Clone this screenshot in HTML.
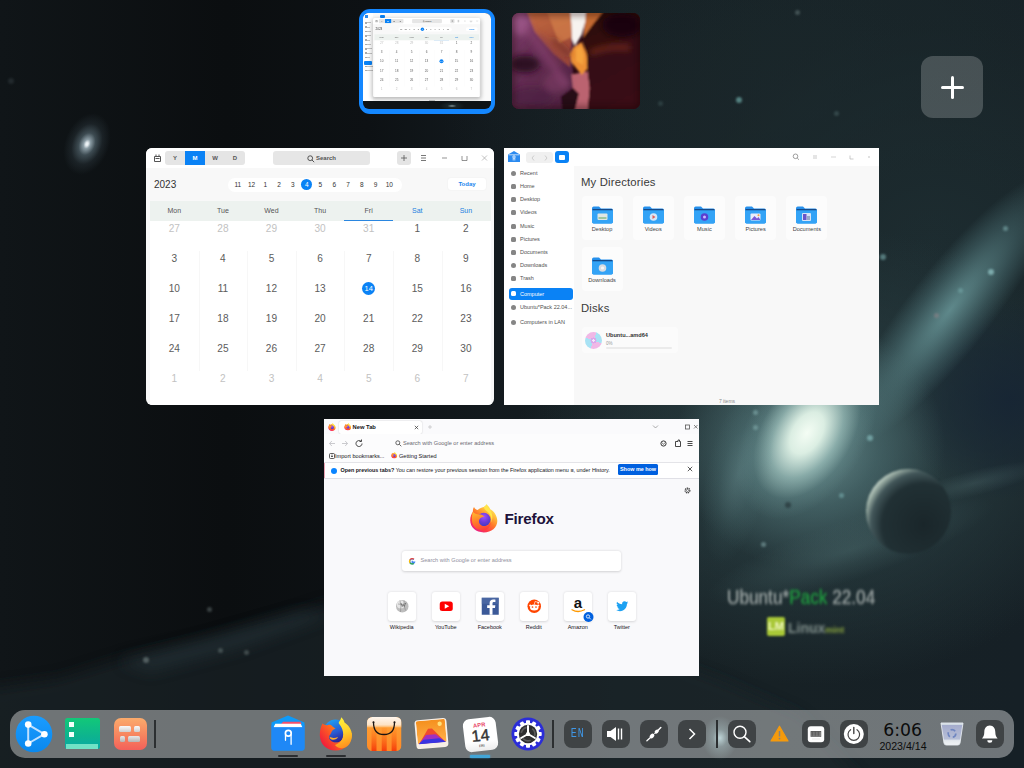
<!DOCTYPE html>
<html lang="en">
<head>
<meta charset="utf-8">
<title>Multitasking view</title>
<style>
*{box-sizing:border-box;margin:0;padding:0}
html,body{width:1024px;height:768px;overflow:hidden;background:#0d1114}
body{position:relative;font-family:"Liberation Sans",sans-serif;color:#222}
.abs{position:absolute}
#bg{position:absolute;left:0;top:0;width:1024px;height:768px;overflow:hidden;background:#0c1012}
#bg div{position:absolute}
/* ---------- workspace thumbs ---------- */
#ws1{left:359px;top:9px;width:136px;height:105px;border-radius:11px;background:#1487ff}
#ws1 .in{left:4px;top:4px;width:128px;height:96px;border-radius:6px;overflow:hidden;background:#0e1316}
#ws2{left:512px;top:13px;width:128px;height:96px;border-radius:7px;overflow:hidden;background:#3a1226}
#plus{left:921px;top:56px;width:62px;height:62px;border-radius:12px;background:rgba(255,255,255,.2)}
#plus i{position:absolute;background:#fff;border-radius:2px}
/* ---------- windows ---------- */
.win{position:absolute;overflow:hidden;background:#fff}
.cal{width:348px;height:257px;border-radius:6px}
#fm{left:504px;top:148px;width:375px;height:257px;background:#f8f8f8}
#ff{left:324px;top:419px;width:375px;height:257px;background:#f9f9fb}

/* ---------- calendar ---------- */
.cal{background:#f8f8f8}
.cal .tb{left:0;top:0;width:348px;height:20px;background:#fff}
.cal .seg{left:19px;top:3px;width:80px;height:14px;border-radius:3px;background:#e5e5e5;overflow:hidden}
.cal .seg b{position:absolute;top:0;width:20px;height:14px;font:bold 6px/14px "Liberation Sans",sans-serif;text-align:center;color:#555}
.cal .srch{left:127px;top:3px;width:97px;height:14px;border-radius:3px;background:#e6e6e6;font:bold 6px/14px "Liberation Sans",sans-serif;color:#555;text-align:center;padding-left:9px}
.cal .add{left:251px;top:3px;width:14px;height:14px;border-radius:3px;background:#e4e4e4}
.cal .yr{left:8px;top:30.5px;font:10px/12px "Liberation Sans",sans-serif;color:#333}
.cal .mon{left:82px;top:29.5px;width:174px;height:14px;border-radius:7px;background:#fff}
.cal .mon span{position:absolute;top:0;width:14px;margin-left:-7px;text-align:center;font:6.5px/14px "Liberation Sans",sans-serif;color:#333}
.cal .mon span.on{top:1.5px;width:11px;height:11px;margin-left:-5.5px;border-radius:50%;background:#0a82f5;color:#fff;line-height:11px}
.cal .today{left:302px;top:29.5px;width:38px;height:12.5px;border-radius:3px;background:#fff;box-shadow:0 0 2px rgba(0,0,0,.06);font:bold 6px/12.5px "Liberation Sans",sans-serif;color:#1a86ee;text-align:center}
.cal .wk{left:4px;top:52.5px;width:341px;height:20px;background:#edf2ef}
.cal .wk span{position:absolute;top:0;width:48.6px;text-align:center;font:7px/20px "Liberation Sans",sans-serif;color:#555}
.cal .wk span.we{color:#1a7fe0}
.cal .grid{left:4px;top:72.5px;width:341px;height:185px;background:#fff}
.cal .grid span{position:absolute;width:48.6px;height:30px;text-align:center;font:10.1px/15.4px "Liberation Sans",sans-serif;color:#5c5c5c}
.cal .grid span.o{color:#c2c2c2}
.cal .grid i{position:absolute;top:30px;width:1px;height:120px;background:#f7f7f7}

/* ---------- file manager ---------- */
#fm .tb{left:0;top:0;width:375px;height:18px;background:#fff}
#fm .side{left:0;top:18px;width:70px;height:239px;background:#fff;overflow:hidden}
#fm .side p{position:absolute;left:16px;white-space:nowrap;font:5.5px/10px "Liberation Sans",sans-serif;color:#505050}
#fm .side p i{position:absolute;left:-9px;top:2.5px;width:5px;height:5px;background:#858585;border-radius:1.5px}
#fm .side .sel{position:absolute;left:4.5px;top:122px;width:64.5px;height:11.5px;border-radius:3px;background:#0a82f5}
#fm h4{position:absolute;left:77px;font:normal 11.3px/14px "Liberation Sans",sans-serif;color:#3a3a3a;white-space:nowrap;letter-spacing:.18px}
#fm .fd{position:absolute;width:41px;height:44px;border-radius:4px;background:#fcfcfc}
#fm .fd svg{position:absolute;left:10px;top:10px}
#fm .fd u{position:absolute;left:-10px;width:61px;top:29.5px;text-align:center;text-decoration:none;font:5.6px/7px "Liberation Sans",sans-serif;color:#444}
#fm .disk{left:78px;top:179px;width:96px;height:26px;border-radius:4px;background:#fbfbfb}

/* ---------- firefox ---------- */
#ff .tabs{left:0;top:0;width:375px;height:15.5px;background:#fafafc}
#ff .tab{left:15px;top:1.8px;width:83px;height:13.2px;border-radius:2px;background:#fff;box-shadow:0 0 1.5px rgba(0,0,0,.25);font:bold 5.8px/12.5px "Liberation Sans",sans-serif;color:#15141a;padding-left:13.5px}
#ff .nav{left:0;top:15px;width:375px;height:17px;background:#fcfcfd}
#ff .url{left:67px;top:17.6px;width:264px;height:12.5px;border-radius:2px;background:#fcfcfd;font:5.6px/12.5px "Liberation Sans",sans-serif;color:#6a6a72;padding-left:12px}
#ff .bm{left:0;top:32px;width:375px;height:11px;background:#fcfcfd;font:5.6px/10px "Liberation Sans",sans-serif;color:#15141a;white-space:nowrap}
#ff .nb{left:0;top:43px;width:375px;height:16.5px;background:#fff;border-top:1px solid #e4e4e8;border-bottom:1px solid #e0e0e6;font:5.42px/15px "Liberation Sans",sans-serif;color:#15141a;white-space:nowrap}
#ff .btn{left:294px;top:45.3px;width:40px;height:11.2px;border-radius:1.5px;background:#0060df;color:#fff;font:bold 5.4px/11.2px "Liberation Sans",sans-serif;text-align:center}
#ff .wm{left:180.5px;top:91.3px;font:bold 15.2px/18px "Liberation Sans",sans-serif;color:#20123a;letter-spacing:-.2px}
#ff .sb{left:78px;top:132px;width:219px;height:19.5px;border-radius:3px;background:#fff;box-shadow:0 .5px 2.5px rgba(0,0,0,.16);font:5.6px/19.5px "Liberation Sans",sans-serif;color:#8f8f9d;padding-left:18.5px}
#ff .ts{position:absolute;top:173px;width:28.5px;height:28.5px;border-radius:3px;background:#fff;box-shadow:0 .5px 2.5px rgba(0,0,0,.14)}
#ff .ts svg{position:absolute;left:0;top:0;overflow:visible}
#ff .ts u{position:absolute;left:-10px;top:32px;width:48.5px;text-align:center;text-decoration:none;font:5.5px/7px "Liberation Sans",sans-serif;color:#15141a}
/* ---------- dock ---------- */
#dock{left:10px;top:710px;width:1004px;height:48px;border-radius:15px;background:rgba(255,255,255,.385)}
#dock .ab{position:absolute}
#dock .tr{position:absolute;top:10px;width:27.5px;height:28px;border-radius:8px;background:#3f4345}
#dock .tr svg{position:absolute;left:0;top:0}
#dock .sep{position:absolute;top:10px;width:2px;height:28px;background:#2c2f31}
#dock .ind{position:absolute;top:45.2px;width:20px;height:2.1px;border-radius:1px;background:#2a2d30}
.mini i{position:absolute}
</style>
</head>
<body>
<div id="bg">
<div style="left:0;top:0;width:1024px;height:768px;background:
radial-gradient(ellipse 300px 230px at 815px 455px,rgba(58,86,90,.95),rgba(44,66,70,.6) 45%,rgba(30,44,48,0) 100%),
radial-gradient(ellipse 360px 260px at 800px 110px,rgba(28,42,46,.55),rgba(24,36,40,0) 100%),
radial-gradient(ellipse 430px 400px at 930px 250px,rgba(30,46,50,.9),rgba(25,37,40,.55) 55%,rgba(16,22,25,0) 100%),
linear-gradient(90deg,#101518 0,#0b0e10 22%,#0d1114 36%,#131a1e 48%,#161f23 60%,#172125 75%,#162026 100%)"></div>
<svg style="position:absolute;left:0;top:540px" width="1024" height="228" viewBox="0 0 1024 228"><defs><filter id="cb" x="-10%" y="-40%" width="120%" height="180%"><feGaussianBlur stdDeviation="7"/></filter></defs><path d="M-20 150L60 138 130 116 200 100 280 78 330 62 420 70 520 80 640 110 720 140 800 175 880 260H-20z" fill="#1c272a" opacity=".6" filter="url(#cb)"/><path d="M120 122L210 98 300 72 330 75 240 108 150 132z" fill="#26343a" opacity=".55" filter="url(#cb)"/></svg>
<!-- dark blue patch -->
<div style="left:900px;top:300px;width:220px;height:200px;background:radial-gradient(ellipse 50% 50% at 50% 50%,rgba(22,36,52,.85),rgba(22,36,50,.5) 55%,rgba(22,36,50,0) 100%)"></div>
<!-- nebula band -->
<div style="left:780px;top:268px;width:340px;height:84px;transform:rotate(-52deg);background:radial-gradient(ellipse 50% 50% at 50% 50%,rgba(110,158,160,.8),rgba(84,124,128,.42) 60%,rgba(60,90,94,0) 100%)"></div>
<!-- galaxy glow -->
<div style="left:675px;top:320px;width:270px;height:250px;background:radial-gradient(ellipse 50% 50% at 50% 50%,rgba(128,168,168,.62),rgba(96,136,138,.36) 50%,rgba(60,90,94,0) 100%)"></div>
<div style="left:712px;top:374px;width:190px;height:118px;transform:rotate(-58deg);background:radial-gradient(ellipse 50% 50% at 50% 50%,rgba(244,253,244,1),rgba(226,244,232,.95) 24%,rgba(170,206,200,.6) 52%,rgba(110,150,150,.25) 76%,rgba(90,130,132,0) 100%)"></div>
<div style="left:706px;top:385px;width:64px;height:180px;transform:rotate(12deg);background:radial-gradient(ellipse 50% 50% at 50% 50%,rgba(120,160,162,.3),rgba(90,130,132,.14) 55%,rgba(60,90,94,0) 100%)"></div>
<!-- ray under planet -->
<div style="left:700px;top:520px;width:300px;height:60px;transform:rotate(-18deg);background:radial-gradient(ellipse 50% 50% at 50% 50%,rgba(80,112,114,.4),rgba(60,90,94,0) 100%)"></div>
<div style="left:900px;top:470px;width:150px;height:26px;transform:rotate(-14deg);background:radial-gradient(ellipse 50% 50% at 50% 50%,rgba(90,120,122,.3),rgba(60,90,94,0) 100%)"></div>
<!-- planet -->
<div style="left:866px;top:469px;width:85px;height:85px;border-radius:50%;background:radial-gradient(circle 63px at 68% 66%,#1a262a 0,#213034 66%,#43575a 84%,#9db0a6 95%,#c6d4ca 100%);filter:blur(1px)"></div>
<!-- small galaxy -->
<div style="left:65px;top:112px;width:44px;height:64px;transform:rotate(22deg);background:radial-gradient(ellipse 50% 50% at 50% 50%,rgba(245,250,252,1) 0,rgba(235,242,246,.95) 6%,rgba(170,190,200,.8) 15%,rgba(100,122,132,.55) 36%,rgba(56,70,78,.3) 66%,rgba(40,52,58,0) 100%)"></div>
<!-- stars --><div style="left:736px;top:97px;width:6px;height:6px;border-radius:50%;background:#7fc4c0;opacity:0.58;filter:blur(.8px)"></div><div style="left:794.5px;top:9.5px;width:5.0px;height:5.0px;border-radius:50%;background:#8aa0a0;opacity:0.36;filter:blur(.8px)"></div><div style="left:833.5px;top:110.5px;width:5.0px;height:5.0px;border-radius:50%;background:#6a8a8a;opacity:0.32;filter:blur(.8px)"></div><div style="left:988px;top:269px;width:6px;height:6px;border-radius:50%;background:#a8e0e0;opacity:0.58;filter:blur(.8px)"></div><div style="left:880px;top:254px;width:6px;height:6px;border-radius:50%;background:#8ac4c4;opacity:0.50;filter:blur(.8px)"></div><div style="left:1002.5px;top:225.5px;width:5.0px;height:5.0px;border-radius:50%;background:#9ad0d0;opacity:0.43;filter:blur(.8px)"></div><div style="left:957.5px;top:287.5px;width:5.0px;height:5.0px;border-radius:50%;background:#80b8b8;opacity:0.43;filter:blur(.8px)"></div><div style="left:933.5px;top:312.5px;width:5.0px;height:5.0px;border-radius:50%;background:#b08a90;opacity:0.36;filter:blur(.8px)"></div><div style="left:867px;top:434.5px;width:6px;height:6px;border-radius:50%;background:#9ad8d8;opacity:0.50;filter:blur(.8px)"></div><div style="left:838.5px;top:492.5px;width:5.0px;height:5.0px;border-radius:50%;background:#8ac8c8;opacity:0.43;filter:blur(.8px)"></div><div style="left:752.5px;top:409.5px;width:5.0px;height:5.0px;border-radius:50%;background:#9ac8c8;opacity:0.43;filter:blur(.8px)"></div><div style="left:761.0px;top:541.5px;width:5.0px;height:5.0px;border-radius:50%;background:#a0c8c8;opacity:0.43;filter:blur(.8px)"></div><div style="left:785px;top:502px;width:6px;height:6px;border-radius:50%;background:#1a2428;opacity:0.50;filter:blur(.8px)"></div><div style="left:206.5px;top:606.5px;width:5.0px;height:5.0px;border-radius:50%;background:#8a9a9a;opacity:0.36;filter:blur(.8px)"></div><div style="left:143px;top:657px;width:6px;height:6px;border-radius:50%;background:#9aaaa8;opacity:0.43;filter:blur(.8px)"></div><div style="left:217.5px;top:647.5px;width:5.0px;height:5.0px;border-radius:50%;background:#8a9a98;opacity:0.36;filter:blur(.8px)"></div><div style="left:243.5px;top:649.5px;width:5.0px;height:5.0px;border-radius:50%;background:#8a9a98;opacity:0.36;filter:blur(.8px)"></div><div style="left:657.5px;top:100.5px;width:5.0px;height:5.0px;border-radius:50%;background:#5a7a7a;opacity:0.29;filter:blur(.8px)"></div><div style="left:8px;top:78px;width:6px;height:6px;border-radius:50%;background:#3a4448;opacity:0.43;filter:blur(.8px)"></div>
<div style="left:752.500px;top:424.500px;width:5px;height:5px;border-radius:50%;background:#9ac8c8;opacity:.4;filter:blur(.8px)"></div>
<div style="left:702px;top:716px;width:36px;height:44px;background:radial-gradient(ellipse 50% 50% at 50% 50%,rgba(190,235,240,.75),rgba(150,200,205,.3) 40%,rgba(120,170,175,0) 100%)"></div>
<!-- wallpaper caption -->
<div id="cap1" style="left:727px;top:586px;white-space:nowrap;font:20px/22px 'Liberation Sans',sans-serif;color:#aeb6b4;text-shadow:0 0 1px #aeb6b4;filter:blur(1.4px);opacity:.84;transform-origin:0 0;transform:scaleX(.86)">Ubuntu*<span style="color:#1faa40;text-shadow:0 0 1px #1faa40">Pack</span> 22.04</div>
<div style="left:767px;top:617px;width:18px;height:19px;background:#a9c838;border-radius:2px;filter:blur(1px);font:bold 11px/19px 'Liberation Sans',sans-serif;color:#eef6c0;text-align:center">LM</div>
<div style="left:788px;top:620px;white-space:nowrap;font:bold 14px/16px 'Liberation Sans',sans-serif;color:#84928e;filter:blur(1.4px)">Linux<span style="color:#8faa40;font-size:9px">mint</span></div>
</div>

<div id="ws1" class="abs"><div class="in abs">
<div class="abs" style="left:0;top:0;width:128px;height:87.600px;background:#fafafa"></div>
<div class="abs" style="left:0;top:0;width:9.800px;height:87.600px;background:#fff"></div>
<div class="abs mini"><i style="left:2px;top:9.0px;width:1.500px;height:1.500px;background:#aaa"></i><i style="left:4.200px;top:9.3px;width:3.5px;height:1px;background:#c4c4c4"></i><i style="left:2px;top:13.3px;width:1.500px;height:1.500px;background:#aaa"></i><i style="left:4.200px;top:13.7px;width:3px;height:1px;background:#c4c4c4"></i><i style="left:2px;top:17.7px;width:1.500px;height:1.500px;background:#aaa"></i><i style="left:4.200px;top:18.0px;width:4px;height:1px;background:#c4c4c4"></i><i style="left:2px;top:22.0px;width:1.500px;height:1.500px;background:#aaa"></i><i style="left:4.200px;top:22.4px;width:3.5px;height:1px;background:#c4c4c4"></i><i style="left:2px;top:26.4px;width:1.500px;height:1.500px;background:#aaa"></i><i style="left:4.200px;top:26.7px;width:3px;height:1px;background:#c4c4c4"></i><i style="left:2px;top:30.8px;width:1.500px;height:1.500px;background:#aaa"></i><i style="left:4.200px;top:31.1px;width:4px;height:1px;background:#c4c4c4"></i><i style="left:2px;top:35.1px;width:1.500px;height:1.500px;background:#aaa"></i><i style="left:4.200px;top:35.4px;width:5px;height:1px;background:#c4c4c4"></i><i style="left:2px;top:39.4px;width:1.500px;height:1.500px;background:#aaa"></i><i style="left:4.200px;top:39.8px;width:5px;height:1px;background:#c4c4c4"></i><i style="left:2px;top:43.8px;width:1.500px;height:1.500px;background:#aaa"></i><i style="left:4.200px;top:44.1px;width:3px;height:1px;background:#c4c4c4"></i><i style="left:2px;top:52.5px;width:1.500px;height:1.500px;background:#aaa"></i><i style="left:4.200px;top:52.8px;width:5.5px;height:1px;background:#c4c4c4"></i><i style="left:2px;top:56.8px;width:1.500px;height:1.500px;background:#aaa"></i><i style="left:4.200px;top:57.1px;width:5.5px;height:1px;background:#c4c4c4"></i><i style="left:1px;top:48px;width:8.400px;height:3.600px;border-radius:1px;background:#0a82f5"></i><i style="left:1.500px;top:2px;width:3px;height:3.200px;background:#2a8af0"></i><i style="left:16.500px;top:1.500px;width:5px;height:3px;border-radius:1px;background:#0a82f5"></i></div>
<div class="win cal" style="left:9.700px;top:4.500px;transform-origin:0 0;transform:scale(.3078);box-shadow:0 4px 14px rgba(0,0,0,.28)">
<div class="tb abs"></div>
<svg class="abs" style="left:7px;top:4px" width="9" height="11" viewBox="0 0 9 11"><path d="M1.5 4.5h6v5h-6z M3 4.5v-2 M6 4.5v-2 M2.5 6.5h4" fill="none" stroke="#555" stroke-width="1"/></svg>
<div class="seg abs"><b style="left:0px">Y</b><b style="left:20px;background:#0a82f5;color:#fff">M</b><b style="left:40px">W</b><b style="left:60px">D</b></div>
<div class="srch abs">Search<svg style="position:absolute;left:34px;top:3.5px" width="8" height="8" viewBox="0 0 8 8"><circle cx="3.2" cy="3.2" r="2.4" fill="none" stroke="#444" stroke-width=".9"/><path d="M5 5l2.2 2.2" stroke="#444" stroke-width=".9"/></svg></div>
<div class="add abs"><svg width="14" height="14" viewBox="0 0 14 14"><path d="M7 4v6M4 7h6" stroke="#555" stroke-width=".8"/></svg></div>
<svg class="abs" style="left:272px;top:4px" width="72" height="12" viewBox="0 0 72 12"><path d="M3 3.5h5M3 6h5M3 8.500h5" stroke="#555" stroke-width=".8"/><path d="M24 6h5" stroke="#666" stroke-width=".7"/><path d="M44 4v4.500h5V4" fill="none" stroke="#666" stroke-width=".7"/><path d="M64 3.500l5 5M69 3.500l-5 5" stroke="#999" stroke-width=".6"/></svg>
<div class="yr abs">2023</div>
<div class="mon abs"><span style="left:9.8px">11</span><span style="left:23.6px">12</span><span style="left:37.3px">1</span><span style="left:51.1px">2</span><span style="left:64.9px">3</span><span class="on" style="left:78.7px">4</span><span style="left:92.4px">5</span><span style="left:106.2px">6</span><span style="left:120.0px">7</span><span style="left:133.7px">8</span><span style="left:147.5px">9</span><span style="left:161.3px">10</span></div>
<div class="today abs">Today</div>
<div class="wk abs"><span style="left:0.0px">Mon</span><span style="left:48.6px">Tue</span><span style="left:97.2px">Wed</span><span style="left:145.8px">Thu</span><span style="left:194.4px">Fri</span><span class="we" style="left:243.0px">Sat</span><span class="we" style="left:291.6px">Sun</span><i style="position:absolute;left:194.4px;top:19.5px;width:48.6px;height:1px;background:#2a86e0"></i></div>
<div class="grid abs"><span class="o" style="left:0.0px;top:0.5px">27</span><span class="o" style="left:48.6px;top:0.5px">28</span><span class="o" style="left:97.2px;top:0.5px">29</span><span class="o" style="left:145.8px;top:0.5px">30</span><span class="o" style="left:194.4px;top:0.5px">31</span><span style="left:243.0px;top:0.5px">1</span><span style="left:291.6px;top:0.5px">2</span><span style="left:0.0px;top:30.5px">3</span><span style="left:48.6px;top:30.5px">4</span><span style="left:97.2px;top:30.5px">5</span><span style="left:145.8px;top:30.5px">6</span><span style="left:194.4px;top:30.5px">7</span><span style="left:243.0px;top:30.5px">8</span><span style="left:291.6px;top:30.5px">9</span><span style="left:0.0px;top:60.5px">10</span><span style="left:48.6px;top:60.5px">11</span><span style="left:97.2px;top:60.5px">12</span><span style="left:145.8px;top:60.5px">13</span><span style="left:194.4px;top:60.5px"><em style="display:inline-block;font-style:normal;width:13px;height:13px;border-radius:50%;background:#0a82f5;color:#fff;font-size:7.5px;line-height:13px;vertical-align:top;margin-top:.6px">14</em></span><span style="left:243.0px;top:60.5px">15</span><span style="left:291.6px;top:60.5px">16</span><span style="left:0.0px;top:90.5px">17</span><span style="left:48.6px;top:90.5px">18</span><span style="left:97.2px;top:90.5px">19</span><span style="left:145.8px;top:90.5px">20</span><span style="left:194.4px;top:90.5px">21</span><span style="left:243.0px;top:90.5px">22</span><span style="left:291.6px;top:90.5px">23</span><span style="left:0.0px;top:120.5px">24</span><span style="left:48.6px;top:120.5px">25</span><span style="left:97.2px;top:120.5px">26</span><span style="left:145.8px;top:120.5px">27</span><span style="left:194.4px;top:120.5px">28</span><span style="left:243.0px;top:120.5px">29</span><span style="left:291.6px;top:120.5px">30</span><span class="o" style="left:0.0px;top:150.5px">1</span><span class="o" style="left:48.6px;top:150.5px">2</span><span class="o" style="left:97.2px;top:150.5px">3</span><span class="o" style="left:145.8px;top:150.5px">4</span><span class="o" style="left:194.4px;top:150.5px">5</span><span class="o" style="left:243.0px;top:150.5px">6</span><span class="o" style="left:291.6px;top:150.5px">7</span><i style="left:48.6px"></i><i style="left:97.2px"></i><i style="left:145.8px"></i><i style="left:194.4px"></i><i style="left:243.0px"></i><i style="left:291.6px"></i></div>
</div>
<div class="abs" style="left:76px;top:87.500px;width:26px;height:9px;background:radial-gradient(ellipse 50% 50% at 50% 55%,rgba(160,180,184,.8),rgba(40,56,60,.5) 35%,rgba(20,28,32,0) 100%)"></div>
<div class="abs" style="left:66px;top:86.600px;width:6px;height:.8px;background:#bbb"></div>
</div></div>
<div id="ws2" class="abs"><svg width="128" height="96" viewBox="0 0 128 96"><defs><filter id="b2" x="-10%" y="-10%" width="120%" height="120%"><feGaussianBlur stdDeviation="1.300"/></filter><filter id="b3" x="-20%" y="-20%" width="140%" height="140%"><feGaussianBlur stdDeviation="3.200"/></filter>
<linearGradient id="cl" x1="0" y1="0" x2=".8" y2="1"><stop offset="0" stop-color="#8a4a78"/><stop offset=".35" stop-color="#6a3058"/><stop offset="1" stop-color="#4e2240"/></linearGradient>
<linearGradient id="co" x1="0" y1="0" x2=".4" y2="1"><stop offset="0" stop-color="#c66c3e"/><stop offset="1" stop-color="#9a4638"/></linearGradient>
<linearGradient id="cr" x1="0" y1="0" x2=".3" y2="1"><stop offset="0" stop-color="#2a0a10"/><stop offset=".5" stop-color="#340d12"/><stop offset="1" stop-color="#3a1016"/></linearGradient></defs>
<rect width="128" height="96" fill="#2c0a12"/>
<g filter="url(#b2)">
<path d="M-4 -4H66L60 44 62 76 50 100H-4z" fill="url(#cl)"/>
<path d="M13.700 -4H60L60 26 58 41 58 54 41.700 41 22.500 19z" fill="url(#co)"/>
<path d="M34 -4H59L59.500 24 47 30z" fill="#d07a48" opacity=".8"/>
<path d="M74 -4H93L81.400 11.500 71 25z" fill="#c46a30"/>
<path d="M59.400 61.500L75.500 58.600 77.800 75 75.500 100H62L66.700 80.700 60.800 75z" fill="#bb6470"/>
<path d="M62.300 33.600L69.700 29 74.800 41 75.500 55.700 69.700 62 59.400 49 58 41z" fill="#ec9034"/>
<path d="M64 36L69 33 72 42 71 52 64 48z" fill="#f7a840" opacity=".8"/>
<path d="M75.500 100L77.800 75 75.500 55 74.800 41 71 25 82 10 94 -4H132V100z" fill="url(#cr)"/>
<path d="M58 -4H74L73.300 8.500 69.700 21.800 63 32.800 60 26.200 59.400 11.500z" fill="#f7f3ef"/>
<path d="M49 83.600L60.800 74.800 66.700 80.700 62.300 100H50.500z" fill="#260a18"/>
</g>
<g filter="url(#b3)">
<ellipse cx="13" cy="51" rx="15" ry="9" fill="#290b21" opacity=".92"/>
<ellipse cx="8" cy="10" rx="10" ry="12" fill="#b0649a" opacity=".55"/>
<path d="M14 14L56 74" stroke="#8a4672" stroke-width="9" opacity=".55"/>
<path d="M40 26L58 42" stroke="#5a2420" stroke-width="3.500" opacity=".75"/>
<path d="M28 22L50 52" stroke="#7a3440" stroke-width="3" opacity=".6"/>
<path d="M78 40Q96 32 118 35" fill="none" stroke="#8a3420" stroke-width="5" opacity=".7"/>
<ellipse cx="110" cy="12" rx="20" ry="12" fill="#1a060c" opacity=".9"/>
<ellipse cx="20" cy="84" rx="22" ry="10" fill="#4a2040" opacity=".6"/>
<ellipse cx="44" cy="70" rx="12" ry="10" fill="#86426c" opacity=".5"/>
</g><rect width="128" height="96" fill="none" stroke="#14060c" stroke-width="5" opacity=".5" filter="url(#b3)"/></svg></div>
<div id="plus" class="abs"><i style="left:20px;top:29.5px;width:23px;height:3px"></i><i style="left:30px;top:19.5px;width:3px;height:23px"></i></div>

<div class="win cal" style="left:146px;top:148px">
<div class="tb abs"></div>
<svg class="abs" style="left:7px;top:4px" width="9" height="11" viewBox="0 0 9 11"><path d="M1.5 4.5h6v5h-6z M3 4.5v-2 M6 4.5v-2 M2.5 6.5h4" fill="none" stroke="#555" stroke-width="1"/></svg>
<div class="seg abs"><b style="left:0px">Y</b><b style="left:20px;background:#0a82f5;color:#fff">M</b><b style="left:40px">W</b><b style="left:60px">D</b></div>
<div class="srch abs">Search<svg style="position:absolute;left:34px;top:3.5px" width="8" height="8" viewBox="0 0 8 8"><circle cx="3.2" cy="3.2" r="2.4" fill="none" stroke="#444" stroke-width=".9"/><path d="M5 5l2.2 2.2" stroke="#444" stroke-width=".9"/></svg></div>
<div class="add abs"><svg width="14" height="14" viewBox="0 0 14 14"><path d="M7 4v6M4 7h6" stroke="#555" stroke-width=".8"/></svg></div>
<svg class="abs" style="left:272px;top:4px" width="72" height="12" viewBox="0 0 72 12"><path d="M3 3.5h5M3 6h5M3 8.500h5" stroke="#555" stroke-width=".8"/><path d="M24 6h5" stroke="#666" stroke-width=".7"/><path d="M44 4v4.500h5V4" fill="none" stroke="#666" stroke-width=".7"/><path d="M64 3.500l5 5M69 3.500l-5 5" stroke="#999" stroke-width=".6"/></svg>
<div class="yr abs">2023</div>
<div class="mon abs"><span style="left:9.8px">11</span><span style="left:23.6px">12</span><span style="left:37.3px">1</span><span style="left:51.1px">2</span><span style="left:64.9px">3</span><span class="on" style="left:78.7px">4</span><span style="left:92.4px">5</span><span style="left:106.2px">6</span><span style="left:120.0px">7</span><span style="left:133.7px">8</span><span style="left:147.5px">9</span><span style="left:161.3px">10</span></div>
<div class="today abs">Today</div>
<div class="wk abs"><span style="left:0.0px">Mon</span><span style="left:48.6px">Tue</span><span style="left:97.2px">Wed</span><span style="left:145.8px">Thu</span><span style="left:194.4px">Fri</span><span class="we" style="left:243.0px">Sat</span><span class="we" style="left:291.6px">Sun</span><i style="position:absolute;left:194.4px;top:19.5px;width:48.6px;height:1px;background:#2a86e0"></i></div>
<div class="grid abs"><span class="o" style="left:0.0px;top:0.5px">27</span><span class="o" style="left:48.6px;top:0.5px">28</span><span class="o" style="left:97.2px;top:0.5px">29</span><span class="o" style="left:145.8px;top:0.5px">30</span><span class="o" style="left:194.4px;top:0.5px">31</span><span style="left:243.0px;top:0.5px">1</span><span style="left:291.6px;top:0.5px">2</span><span style="left:0.0px;top:30.5px">3</span><span style="left:48.6px;top:30.5px">4</span><span style="left:97.2px;top:30.5px">5</span><span style="left:145.8px;top:30.5px">6</span><span style="left:194.4px;top:30.5px">7</span><span style="left:243.0px;top:30.5px">8</span><span style="left:291.6px;top:30.5px">9</span><span style="left:0.0px;top:60.5px">10</span><span style="left:48.6px;top:60.5px">11</span><span style="left:97.2px;top:60.5px">12</span><span style="left:145.8px;top:60.5px">13</span><span style="left:194.4px;top:60.5px"><em style="display:inline-block;font-style:normal;width:13px;height:13px;border-radius:50%;background:#0a82f5;color:#fff;font-size:7.5px;line-height:13px;vertical-align:top;margin-top:.6px">14</em></span><span style="left:243.0px;top:60.5px">15</span><span style="left:291.6px;top:60.5px">16</span><span style="left:0.0px;top:90.5px">17</span><span style="left:48.6px;top:90.5px">18</span><span style="left:97.2px;top:90.5px">19</span><span style="left:145.8px;top:90.5px">20</span><span style="left:194.4px;top:90.5px">21</span><span style="left:243.0px;top:90.5px">22</span><span style="left:291.6px;top:90.5px">23</span><span style="left:0.0px;top:120.5px">24</span><span style="left:48.6px;top:120.5px">25</span><span style="left:97.2px;top:120.5px">26</span><span style="left:145.8px;top:120.5px">27</span><span style="left:194.4px;top:120.5px">28</span><span style="left:243.0px;top:120.5px">29</span><span style="left:291.6px;top:120.5px">30</span><span class="o" style="left:0.0px;top:150.5px">1</span><span class="o" style="left:48.6px;top:150.5px">2</span><span class="o" style="left:97.2px;top:150.5px">3</span><span class="o" style="left:145.8px;top:150.5px">4</span><span class="o" style="left:194.4px;top:150.5px">5</span><span class="o" style="left:243.0px;top:150.5px">6</span><span class="o" style="left:291.6px;top:150.5px">7</span><i style="left:48.6px"></i><i style="left:97.2px"></i><i style="left:145.8px"></i><i style="left:194.4px"></i><i style="left:243.0px"></i><i style="left:291.6px"></i></div>
</div>
<div id="fm" class="win">
<div class="tb abs"></div>
<svg class="abs" style="left:4px;top:3px" width="12" height="11" viewBox="0 0 12 11"><path d="M0 3.500L6 0l6 3.500V11H0z" fill="#2a8af0"/><path d="M.5 3.800h11" stroke="#fff" stroke-width=".7"/><circle cx="6" cy="6" r="1.200" fill="none" stroke="#fff" stroke-width=".8"/><path d="M5.200 7v2.500M6.800 7v2.500" stroke="#fff" stroke-width=".7"/></svg>
<div class="abs" style="left:22px;top:3.500px;width:27px;height:11.500px;border-radius:3px;background:#f0f0f0"></div>
<svg class="abs" style="left:22px;top:3.500px" width="27" height="12" viewBox="0 0 27 12"><path d="M8 3.500L6 6l2 2.500M19 3.500L21 6l-2 2.500" fill="none" stroke="#c4c4c4" stroke-width=".8"/></svg>
<div class="abs" style="left:51px;top:3px;width:14px;height:12px;border-radius:3px;background:#0a82f5"><i style="position:absolute;left:4px;top:3.500px;width:6px;height:5px;border-radius:1px;background:#fff"></i></div>
<svg class="abs" style="left:286px;top:3px" width="86" height="12" viewBox="0 0 86 12"><circle cx="5.500" cy="5.300" r="2.300" fill="none" stroke="#777" stroke-width=".7"/><path d="M7.200 7l1.800 1.800" stroke="#777" stroke-width=".7"/><path d="M23 5h4M23 7h4" stroke="#aaa" stroke-width=".6"/><path d="M41 6h5" stroke="#bbb" stroke-width=".6"/><path d="M60 4.500v3.500h3.500" fill="none" stroke="#aaa" stroke-width=".6"/><path d="M78 5l2 2M80 5l-2 2" stroke="#ccc" stroke-width=".6"/></svg>
<div class="side abs"><div class="sel"></div><p style="top:2px"><i style="border-radius:50%;"></i>Recent</p><p style="top:15px"><i style=""></i>Home</p><p style="top:28px"><i style=""></i>Desktop</p><p style="top:41px"><i style=""></i>Videos</p><p style="top:55px"><i style=""></i>Music</p><p style="top:68px"><i style=""></i>Pictures</p><p style="top:81px"><i style=""></i>Documents</p><p style="top:94px"><i style="border-radius:50%;"></i>Downloads</p><p style="top:107px"><i style=""></i>Trash</p><p style="top:122.5px;color:#fff"><i style="background:#fff"></i>Computer</p><p style="top:136px"><i style="border-radius:50%;"></i>Ubuntu*Pack 22.04...</p><p style="top:151px"><i style="border-radius:50%;"></i>Computers in LAN</p></div>
<h4 style="top:27px">My Directories</h4>
<div class="fd" style="left:77.5px;top:48px"><svg width="21" height="18" viewBox="0 0 21 18"><path d="M0 2.2Q0 .5 1.700.5H7l2 2h10.300Q21 2.500 21 4.200V15.800Q21 17.500 19.300 17.500H1.700Q0 17.500 0 15.800z" fill="#2690ec"/><path d="M.6 3.200h19.800v1.200H.6z" fill="#123a72"/><path d="M0 4.400h21V15.800Q21 17.500 19.300 17.500H1.700Q0 17.500 0 15.800z" fill="#33a3f6"/><rect x="5.500" y="7.500" width="10" height="6.500" rx="1" fill="#dfe7e4"/><rect x="6.500" y="11" width="8" height="2" fill="#9fc6a0"/></svg><u>Desktop</u></div><div class="fd" style="left:128.7px;top:48px"><svg width="21" height="18" viewBox="0 0 21 18"><path d="M0 2.2Q0 .5 1.700.5H7l2 2h10.300Q21 2.500 21 4.200V15.800Q21 17.500 19.300 17.500H1.700Q0 17.500 0 15.800z" fill="#2690ec"/><path d="M.6 3.200h19.800v1.200H.6z" fill="#123a72"/><path d="M0 4.400h21V15.800Q21 17.500 19.300 17.500H1.700Q0 17.500 0 15.800z" fill="#33a3f6"/><circle cx="10.500" cy="11" r="3.800" fill="#d7e6f7"/><path d="M9.500 9l3 2-3 2z" fill="#e0605a"/></svg><u>Videos</u></div><div class="fd" style="left:179.9px;top:48px"><svg width="21" height="18" viewBox="0 0 21 18"><path d="M0 2.2Q0 .5 1.700.5H7l2 2h10.300Q21 2.500 21 4.200V15.800Q21 17.500 19.300 17.500H1.700Q0 17.500 0 15.800z" fill="#2690ec"/><path d="M.6 3.200h19.800v1.200H.6z" fill="#123a72"/><path d="M0 4.400h21V15.800Q21 17.500 19.300 17.500H1.700Q0 17.500 0 15.800z" fill="#33a3f6"/><circle cx="10.500" cy="11" r="3.800" fill="#5a3fd0"/><circle cx="10.500" cy="11" r="1.500" fill="#c9b8ff"/></svg><u>Music</u></div><div class="fd" style="left:231.10000000000002px;top:48px"><svg width="21" height="18" viewBox="0 0 21 18"><path d="M0 2.2Q0 .5 1.700.5H7l2 2h10.300Q21 2.500 21 4.200V15.800Q21 17.500 19.300 17.500H1.700Q0 17.500 0 15.800z" fill="#2690ec"/><path d="M.6 3.200h19.800v1.200H.6z" fill="#123a72"/><path d="M0 4.400h21V15.800Q21 17.500 19.300 17.500H1.700Q0 17.500 0 15.800z" fill="#33a3f6"/><rect x="5.500" y="7.500" width="10" height="7" rx="1" fill="#e9eefa"/><path d="M6 14l3.500-4 2.500 2.500 1.500-1.500 2 3z" fill="#7a5ad8"/><circle cx="13.500" cy="9.300" r="1" fill="#f0a040"/></svg><u>Pictures</u></div><div class="fd" style="left:282.3px;top:48px"><svg width="21" height="18" viewBox="0 0 21 18"><path d="M0 2.2Q0 .5 1.700.5H7l2 2h10.300Q21 2.500 21 4.200V15.800Q21 17.500 19.300 17.500H1.700Q0 17.500 0 15.800z" fill="#2690ec"/><path d="M.6 3.200h19.800v1.200H.6z" fill="#123a72"/><path d="M0 4.400h21V15.800Q21 17.500 19.300 17.500H1.700Q0 17.500 0 15.800z" fill="#33a3f6"/><rect x="6" y="7" width="9" height="8" rx="1" fill="#d9e4f6"/><rect x="7" y="8" width="3.500" height="6" fill="#6a55c8"/><rect x="11" y="10" width="3" height="4" fill="#9aa9c8"/></svg><u>Documents</u></div><div class="fd" style="left:77.5px;top:99px"><svg width="21" height="18" viewBox="0 0 21 18"><path d="M0 2.2Q0 .5 1.700.5H7l2 2h10.300Q21 2.500 21 4.200V15.800Q21 17.500 19.300 17.500H1.700Q0 17.500 0 15.800z" fill="#2690ec"/><path d="M.6 3.200h19.800v1.200H.6z" fill="#123a72"/><path d="M0 4.400h21V15.800Q21 17.500 19.300 17.500H1.700Q0 17.500 0 15.800z" fill="#33a3f6"/><circle cx="10.500" cy="11" r="3.800" fill="#d9dde2"/><circle cx="10.500" cy="11" r="1.600" fill="#f7f7f7"/></svg><u>Downloads</u></div>
<h4 style="top:153px">Disks</h4>
<div class="disk abs"><i style="position:absolute;left:3px;top:5px;width:17px;height:17px;border-radius:50%;background:radial-gradient(circle at 50% 50%,#f4e8fa 0 10%,#d8a8ea 12% 24%,rgba(255,255,255,0) 26%),conic-gradient(from 20deg,#a8e2f4 0 25%,#f0b8e6 25% 50%,#a8e2f4 50% 75%,#f0b8e6 75% 100%)"></i><b style="position:absolute;left:24px;top:5px;font:bold 5.600px/7px 'Liberation Sans',sans-serif;color:#333;white-space:nowrap">Ubuntu...amd64</b><span style="position:absolute;left:24px;top:13.500px;font:4.500px/6px 'Liberation Sans',sans-serif;color:#999">0%</span><i style="position:absolute;left:24px;top:20px;width:66px;height:1.500px;border-radius:1px;background:#ebebeb"></i></div>
<div class="abs" style="left:193px;top:249.500px;width:60px;text-align:center;font:5px/7px 'Liberation Sans',sans-serif;color:#8a8a8a">7 items</div>
</div>
<div id="ff" class="win"><svg width="0" height="0" style="position:absolute"><defs>
<linearGradient id="fxa" x1=".85" y1=".08" x2=".2" y2=".95"><stop offset="0" stop-color="#fff36a"/><stop offset=".25" stop-color="#ffbd3a"/><stop offset=".5" stop-color="#ff7a2a"/><stop offset=".78" stop-color="#ff3a48"/><stop offset="1" stop-color="#e8208a"/></linearGradient>
<radialGradient id="fxb" cx=".5" cy=".3" r=".75"><stop offset="0" stop-color="#a050ff"/><stop offset=".55" stop-color="#6a3bd8"/><stop offset="1" stop-color="#3a3ac0"/></radialGradient>
<linearGradient id="fxc" x1=".3" y1="0" x2=".6" y2="1"><stop offset="0" stop-color="#ffb62e"/><stop offset=".5" stop-color="#ff7a2a"/><stop offset="1" stop-color="#ff3d3a"/></linearGradient>
<symbol id="fxlogo" viewBox="0 0 100 100"><path d="M60 3C66 10 70 14 72 20 84 26 96 42 96 60 96 82 76 99 50 99 24 99 4 82 4 58 4 46 8 36 13 29 13 23 14 17 17 13 20 19 24 22 29 23 34 19 42 14 50 13 54 10 58 7 60 3z" fill="url(#fxa)"/><circle cx="50" cy="55" r="23" fill="url(#fxb)"/><path d="M13 29C18 36 26 38 34 38 42 38 48 40 52 46 44 46 36 50 34 58 32 68 40 78 52 78 64 78 72 70 74 62 74 80 62 92 46 92 26 92 10 78 10 58 10 46 11 36 13 29z" fill="url(#fxc)"/><path d="M60 3C62 12 68 16 72 24 80 36 82 52 74 66 78 52 74 40 66 32 60 26 52 22 50 13 54 10 58 7 60 3z" fill="#ffe64a"/></symbol>
</defs></svg>
<div class="tabs abs"></div>
<svg class="abs" style="left:3.500px;top:4px" width="8" height="8"><use href="#fxlogo" width="8" height="8"/></svg>
<div class="tab abs">New Tab<svg style="position:absolute;left:4.500px;top:2.500px" width="7.500" height="7.500"><use href="#fxlogo" width="7.500" height="7.500"/></svg><svg style="position:absolute;left:75px;top:4px" width="5" height="5" viewBox="0 0 5 5"><path d="M.8.800l3.400 3.400M4.200.800L.8 4.200" stroke="#333" stroke-width=".7"/></svg></div>
<svg class="abs" style="left:100px;top:3px" width="275" height="10" viewBox="0 0 275 10"><path d="M6 3v4M4 5h4" stroke="#bbb" stroke-width=".6"/><path d="M229 3.500l2.500 2.500 2.500-2.500" fill="none" stroke="#888" stroke-width=".7"/><rect x="261.500" y="3" width="4" height="4" fill="none" stroke="#555" stroke-width=".8"/><path d="M270 3l3.500 3.500M273.500 3L270 6.500" stroke="#555" stroke-width=".7"/></svg>
<div class="nav abs"></div>
<svg class="abs" style="left:0;top:16.600px" width="375" height="15" viewBox="0 0 375 15"><path d="M11 7.500H5.500M7.800 5L5.500 7.500 7.800 10" fill="none" stroke="#bdbdc2" stroke-width=".8"/><path d="M18 7.500h5.500M21.200 5l2.300 2.500-2.300 2.500" fill="none" stroke="#bdbdc2" stroke-width=".8"/><path d="M38 7.500a3 3 0 1 1-1-2.200M37.500 3.500v2h-2" fill="none" stroke="#333" stroke-width=".9"/><circle cx="339.500" cy="7.500" r="2.600" fill="none" stroke="#333" stroke-width="1"/><path d="M338.200 7l1.300 1.200L340.800 7" fill="none" stroke="#333" stroke-width=".8"/><path d="M351.500 5.500h2.500v-1.500h1.500v1.500h1v5h-5z" fill="none" stroke="#333" stroke-width=".9"/><path d="M363.500 5.500h5M363.500 7.500h5M363.500 9.500h5" stroke="#333" stroke-width=".9"/></svg>
<div class="url abs">Search with Google or enter address<svg style="position:absolute;left:3.500px;top:3px" width="7" height="7" viewBox="0 0 7 7"><circle cx="2.800" cy="2.800" r="2" fill="none" stroke="#444" stroke-width=".8"/><path d="M4.300 4.300L6.300 6.300" stroke="#444" stroke-width=".8"/></svg></div>
<div class="bm abs"><svg style="position:absolute;left:4.500px;top:1.500px" width="6" height="6" viewBox="0 0 6 6"><rect x=".5" y=".5" width="5" height="5" rx="1" fill="none" stroke="#333" stroke-width=".8"/><path d="M3 1.500v2.500M2 3l1 1 1-1" fill="none" stroke="#333" stroke-width=".7"/></svg><span style="position:absolute;left:11px">Import bookmarks...</span><svg style="position:absolute;left:67px;top:1px" width="6.500" height="6.500"><use href="#fxlogo" width="6.500" height="6.500"/></svg><span style="position:absolute;left:75px">Getting Started</span></div>
<div class="nb abs"><i style="position:absolute;left:0;top:0;width:1px;height:15px;background:#e8a0b0"></i><i style="position:absolute;left:7px;top:4.500px;width:6px;height:6px;border-radius:50%;background:#0a84ff"></i><span style="position:absolute;left:16.500px"><b>Open previous tabs?</b> You can restore your previous session from the Firefox application menu <b>≡</b>, under History.</span><svg style="position:absolute;left:363px;top:3px" width="6" height="6" viewBox="0 0 6 6"><path d="M.8.800l4.400 4.400M5.200.800L.8 5.200" stroke="#333" stroke-width=".8"/></svg></div>
<div class="btn abs">Show me how</div>
<svg class="abs" style="left:359.500px;top:67.500px" width="7" height="7" viewBox="0 0 7 7"><circle cx="3.500" cy="3.500" r="2.300" fill="none" stroke="#444" stroke-width="1.400" stroke-dasharray="1.200 .6"/><circle cx="3.500" cy="3.500" r="1" fill="none" stroke="#444" stroke-width=".6"/></svg>
<svg class="abs" style="left:145px;top:84px" width="29.500" height="30"><use href="#fxlogo" width="29.500" height="30"/></svg>
<div class="wm abs">Firefox</div>
<div class="sb abs">Search with Google or enter address<svg style="position:absolute;left:5.500px;top:5.800px" width="8.500" height="8.500" viewBox="0 0 14 14"><path d="M7 6v2.600h3.700A4 4 0 1 1 9.600 4.200" fill="none" stroke="#4285f4" stroke-width="2.200"/><path d="M3.300 9.500A4.300 4.300 0 0 1 3.300 4.500" fill="none" stroke="#fbbc05" stroke-width="2.200"/><path d="M3.300 4.500A4.300 4.300 0 0 1 9.800 3.800" fill="none" stroke="#ea4335" stroke-width="2.200"/><path d="M3.300 9.500A4.300 4.300 0 0 0 9.500 10.500" fill="none" stroke="#34a853" stroke-width="2.200"/></svg></div>
<div class="ts" style="left:63.5px"><svg width="28.5" height="28.5" viewBox="0 0 57 57"><circle cx="28.500" cy="28.500" r="12.500" fill="#bdbdbd"/><circle cx="25.500" cy="25" r="8" fill="#e6e6e6"/><path d="M20 24q8 3 17-2M24 17q3 12 1 23M32 17q-1 10 3 20" fill="none" stroke="#8a8a8a" stroke-width="1.200"/><path d="M26 22l2.500 7 2-4 2 4 2.500-7" fill="none" stroke="#555" stroke-width="1.300"/></svg><u>Wikipedia</u></div><div class="ts" style="left:107.5px"><svg width="28.5" height="28.5" viewBox="0 0 57 57"><rect x="15.500" y="19" width="26" height="19" rx="5" fill="#f00"/><path d="M25.500 23.500l9 5-9 5z" fill="#fff"/></svg><u>YouTube</u></div><div class="ts" style="left:151.5px"><svg width="28.5" height="28.5" viewBox="0 0 57 57"><rect x="11.500" y="11.500" width="34" height="34" fill="#3b5998"/><rect x="11.500" y="11.500" width="34" height="12" fill="#5470a8" opacity=".6"/><path d="M33 45.500V32h5l.700-5.500H33v-3.500c0-1.700.500-2.800 2.800-2.800h3V15.300c-.500-.100-2.300-.300-4.400-.300-4.300 0-7.200 2.600-7.200 7.400v4.100h-4.900V32h4.900v13.500z" fill="#fff"/></svg><u>Facebook</u></div><div class="ts" style="left:195.5px"><svg width="28.5" height="28.5" viewBox="0 0 57 57"><circle cx="28.500" cy="28.500" r="13.500" fill="#ff4500"/><ellipse cx="28.500" cy="31" rx="8.500" ry="6" fill="#fff"/><circle cx="36.500" cy="21.500" r="2" fill="#fff"/><circle cx="20.500" cy="27" r="2.200" fill="#fff"/><circle cx="36.500" cy="27" r="2.200" fill="#fff"/><circle cx="25" cy="30" r="1.700" fill="#ff4500"/><circle cx="32" cy="30" r="1.700" fill="#ff4500"/><path d="M28.500 25l1.500-6 6 1.500" fill="none" stroke="#fff" stroke-width="1.300"/></svg><u>Reddit</u></div><div class="ts" style="left:239.5px"><svg width="28.5" height="28.5" viewBox="0 0 57 57"><text x="28" y="32" text-anchor="middle" font-family="Liberation Sans,sans-serif" font-weight="bold" font-size="30" fill="#111">a</text><path d="M16 35.500q12 7 25 0" fill="none" stroke="#f90" stroke-width="2.600" stroke-linecap="round"/><circle cx="49" cy="50" r="10" fill="#0060df"/><circle cx="48" cy="49" r="3.300" fill="none" stroke="#fff" stroke-width="1.600"/><path d="M50.500 51.500l3.300 3.300" stroke="#fff" stroke-width="1.600"/></svg><u>Amazon</u></div><div class="ts" style="left:283.5px"><svg width="28.5" height="28.5" viewBox="0 0 57 57"><path transform="translate(28.500 28.500) scale(.84) translate(-28.500 -28.500)" d="M43 19.500c-1.100.500-2.200.800-3.400 1 1.200-.700 2.200-1.900 2.600-3.300-1.200.700-2.400 1.200-3.800 1.400a5.900 5.900 0 0 0-10.200 5.400c-4.900-.200-9.300-2.600-12.200-6.200a5.900 5.900 0 0 0 1.800 7.900c-1 0-1.900-.300-2.700-.700 0 2.900 2 5.300 4.700 5.900-.900.200-1.800.300-2.700.100.800 2.300 2.900 4 5.500 4.100a11.900 11.900 0 0 1-8.700 2.400 16.700 16.700 0 0 0 9 2.700c10.900 0 16.800-9 16.800-16.800v-.800c1.200-.800 2.200-1.900 3-3.100z" fill="#1da1f2"/></svg><u>Twitter</u></div>
</div>

<div id="dock" class="abs">
<!-- launcher -->
<svg class="ab" style="left:4.800px;top:4.800px" width="38" height="38" viewBox="0 0 38 38"><defs><linearGradient id="lg1" x1="0" y1="0" x2="0" y2="1"><stop offset="0" stop-color="#1a9cff"/><stop offset="1" stop-color="#0a88ee"/></linearGradient></defs><circle cx="19" cy="19" r="18.300" fill="url(#lg1)"/><path d="M13.200 9.600L29.400 19.200 13.200 28.500z" fill="none" stroke="#bfe0ff" stroke-width="2" stroke-linejoin="round"/><circle cx="13.200" cy="9.600" r="3.300" fill="#fff"/><circle cx="29.400" cy="19.200" r="3.300" fill="#fff"/><circle cx="13.200" cy="28.500" r="3.300" fill="#fff"/></svg>
<!-- multitask -->
<div class="ab" style="left:54.500px;top:8px;width:35px;height:31px;border-radius:2.500px;background:linear-gradient(180deg,#12c878 0,#0db38f 60%,#08a9a6 100%)"><i class="ab" style="left:4px;top:4px;width:5px;height:5px;background:#f4fffa"></i><i class="ab" style="left:4px;top:13.500px;width:5px;height:5px;background:#f4fffa"></i><i class="ab" style="left:1.500px;top:26px;width:32px;height:4.500px;background:#70e2c6"></i></div>
<!-- workspace -->
<div class="ab" style="left:103.500px;top:8px;width:33.500px;height:32px;border-radius:7px;background:linear-gradient(180deg,#fbab6c 0,#f7845f 55%,#f3605a 100%)"><i class="ab" style="left:5.500px;top:8px;width:11.500px;height:6px;border-radius:1.500px;background:linear-gradient(180deg,#fafafa,#cfcfcf)"></i><i class="ab" style="left:20.200px;top:8px;width:6.800px;height:6px;border-radius:1.500px;background:linear-gradient(180deg,#fafafa,#cfcfcf)"></i><i class="ab" style="left:6px;top:17.800px;width:5.500px;height:6.500px;border-radius:1.500px;background:linear-gradient(180deg,#e8e8e8,#b4b4b4)"></i><i class="ab" style="left:14.500px;top:17.800px;width:11.500px;height:6.500px;border-radius:1.500px;background:linear-gradient(180deg,#e8e8e8,#b4b4b4)"></i></div>
<i class="sep" style="left:143.700px"></i>
<!-- file manager -->
<svg class="ab" style="left:261px;top:5px" width="34" height="36" viewBox="0 0 34 36"><path d="M17 .5L33.500 7.500V33Q33.500 35.500 31 35.500H3Q.5 35.500 .5 33V7.500z" fill="#0e9af8"/><path d="M12 6.800h17.500l1.200 2.400H10z" fill="#f2506c"/><path d="M4.300 8.800h25.400l1.800 3.600H2.500z" fill="#fff"/><path d="M.5 9.500l2 2.800h29l2-2.800V33Q33.500 35.500 31 35.500H3Q.5 35.500 .5 33z" fill="#1f88f6"/><circle cx="17.300" cy="18.300" r="2.900" fill="none" stroke="#fff" stroke-width="1.700"/><path d="M14.500 20v5.300M20.100 20v9.300" stroke="#fff" stroke-width="1.300" stroke-linecap="round"/></svg>
<i class="ind" style="left:268px"></i>
<!-- firefox (classic) -->
<svg class="ab" style="left:309px;top:6px" width="34" height="36" viewBox="0 0 34 36"><defs><linearGradient id="fg1" x1=".3" y1="0" x2=".7" y2="1"><stop offset="0" stop-color="#1fa0f5"/><stop offset=".55" stop-color="#2a5ad0"/><stop offset="1" stop-color="#2a1a8a"/></linearGradient><linearGradient id="fg2" x1=".9" y1=".2" x2=".1" y2=".75"><stop offset="0" stop-color="#ffb01e"/><stop offset=".45" stop-color="#ff6a1e"/><stop offset="1" stop-color="#f0203a"/></linearGradient><linearGradient id="fg3" x1=".4" y1="0" x2=".6" y2="1"><stop offset="0" stop-color="#fff03a"/><stop offset=".5" stop-color="#ffd02a"/><stop offset="1" stop-color="#ff8a1e"/></linearGradient></defs>
<circle cx="16.500" cy="15" r="11.500" fill="url(#fg1)"/>
<path d="M3.500 7.500C5 9 7 9.500 9 9 11 8.500 12.500 9 13.500 10.500L16.500 12.800C14.500 13.500 13 14.500 12.500 16 12 18 10.500 19 10 20.500 10 24 13 26.500 17 26.500 21 26.500 24.200 24 24.200 20L33 17C33.500 27 26 34.500 16.500 34.500 7 34.500.800 27.500.800 19 .800 14 2 10 3.500 7.500z" fill="url(#fg2)"/>
<path d="M22.200 1.200C22 4 20 5 19.600 7 21 9 23.500 12 24 16 24.500 20 24 23 21 26 19 28 16 29 16 29 20 34 27 32.500 30 28.500 33 24.500 33.500 19 32.200 15 31 11 28 8 25.500 6.500 25 4 23.500 2.500 22.200 1.200z" fill="url(#fg3)"/>
<path d="M10.500 20.500C13 22.500 16 22 19 21 18 23.500 15 24.200 12.500 23.500 11.300 23 10.700 22 10.500 20.500z" fill="#ffae2a"/></svg>
<i class="ind" style="left:316px"></i>
<!-- store -->
<svg class="ab" style="left:357px;top:7px" width="34.500" height="34" viewBox="0 0 34.500 34"><defs><linearGradient id="sg1" x1="0" y1="0" x2="0" y2="1"><stop offset="0" stop-color="#ffa436"/><stop offset="1" stop-color="#ff8a26"/></linearGradient><linearGradient id="sg2" x1="0" y1="0" x2="0" y2="1"><stop offset="0" stop-color="#ff8a1e" stop-opacity=".2"/><stop offset="1" stop-color="#f53c0c"/></linearGradient><linearGradient id="sg3" x1="0" y1="0" x2="0" y2="1"><stop offset="0" stop-color="#fff6ee"/><stop offset=".75" stop-color="#fde2c4"/><stop offset="1" stop-color="#ffb057"/></linearGradient><clipPath id="sc1"><rect x="0" y="0" width="34.500" height="34" rx="5.500"/></clipPath></defs><g clip-path="url(#sc1)"><rect width="34.500" height="34" fill="url(#sg1)"/><path d="M4.500 9v25h5V9zM14.700 9v25h5V9zM24.600 9v25h5V9z" fill="url(#sg2)"/><rect width="34.500" height="10.500" fill="url(#sg3)"/></g><path d="M6.500 5.500Q6.500 17.500 17 17.500T27.500 5.500" fill="none" stroke="#1a1412" stroke-width="1.300" stroke-linecap="round"/><circle cx="6.500" cy="5.300" r="1" fill="#1a1412"/><circle cx="27.500" cy="5.300" r="1" fill="#1a1412"/></svg>
<!-- image viewer -->
<svg class="ab" style="left:404px;top:7px" width="37" height="35" viewBox="0 0 37 35"><defs><linearGradient id="ig1" x1="0" y1="0" x2="0" y2="1"><stop offset="0" stop-color="#f5901e"/><stop offset="1" stop-color="#ffb04a"/></linearGradient><clipPath id="ic1"><rect x="3" y="3" width="29" height="23" rx="1.500"/></clipPath></defs><g transform="rotate(-5 18 17)"><rect x="1.500" y="2" width="32" height="29" rx="3.500" fill="#f7efe6"/><g clip-path="url(#ic1)"><rect x="3" y="3" width="29" height="23" fill="url(#ig1)"/><circle cx="26.500" cy="7.500" r="2.200" fill="#ffe07a"/><path d="M5 25L14.500 11.500h4L30 25z" fill="#f04a2e"/><path d="M4 26L12 17.500h9.500L31 26z" fill="#a030c0"/><path d="M3 26.500L9 22h16l7 4.500z" fill="#3a34e0"/></g></g></svg>
<!-- calendar -->
<div class="ab" style="left:453.500px;top:7.500px;width:33px;height:33px;border-radius:6.500px;background:linear-gradient(180deg,#fff 70%,#ececec);transform:rotate(-7deg);text-align:center;font-family:'Liberation Sans',sans-serif"><b style="position:absolute;left:0;top:3.500px;width:33px;font-size:5.700px;line-height:7px;color:#e84868;letter-spacing:.3px">APR</b><span style="position:absolute;left:0;top:10px;width:33px;font-size:16px;line-height:16px;color:#343434;letter-spacing:.3px;-webkit-text-stroke:.45px #343434">14</span><b style="position:absolute;left:0;top:26px;width:33px;font-size:3.500px;line-height:4px;color:#666">FRI</b></div>
<i class="ind" style="left:460px;top:44.500px;height:3.500px;background:#3aaee8;box-shadow:0 0 2px #4ab8f0;opacity:.85;filter:blur(.5px)"></i>
<!-- settings -->
<svg class="ab" style="left:501px;top:7px" width="34" height="34" viewBox="-17 -17 34 34"><circle r="16.500" fill="#2b2dd8"/><g fill="#fff"><circle r="11.200"/><g id="teeth"><rect x="-2" y="-13.700" width="4" height="4.500" rx=".8"/><rect x="-2" y="9.200" width="4" height="4.500" rx=".8"/><rect x="-13.700" y="-2" width="4.500" height="4" rx=".8"/><rect x="9.200" y="-2" width="4.500" height="4" rx=".8"/></g><use href="#teeth" transform="rotate(30)"/><use href="#teeth" transform="rotate(60)"/></g><circle r="9.200" fill="#2e2e30"/><g stroke="#fff" stroke-width="2" stroke-linecap="round"><path d="M0 0V-8M0 0L6.900 4M0 0L-6.900 4"/></g><circle r="6.800" fill="none" stroke="#5a5a5a" stroke-width="1.700" stroke-dasharray="8.200 6.040" transform="rotate(-53)"/><circle r="2.100" fill="#fff"/></svg>
<i class="sep" style="left:542px"></i>
<!-- tray -->
<div class="tr" style="left:554px"><span style="position:absolute;left:0;top:0;width:27.500px;text-align:center;font:13.500px/27px 'Liberation Mono',monospace;color:#3f97e6;letter-spacing:1.200px;transform:scaleX(.74)">EN</span></div>
<div class="tr" style="left:592.300px"><svg width="27.500" height="28" viewBox="0 0 27.500 28"><path d="M5 11h3.500L14 7v14l-5.500-4H5z" fill="#fff"/><path d="M16.500 8.500v11M19.500 8.500v11" stroke="#fff" stroke-width="1.400"/></svg></div>
<div class="tr" style="left:630.300px"><svg width="27.500" height="28" viewBox="0 0 27.500 28"><path d="M6.900 20.700L11 17" stroke="#fff" stroke-width="1.300" stroke-linecap="round"/><ellipse cx="12" cy="16" rx="2.700" ry="1.900" transform="rotate(-43 12 16)" fill="#fff"/><ellipse cx="16.700" cy="11.600" rx="2.400" ry="1.700" transform="rotate(-43 16.700 11.600)" fill="#fff"/><path d="M17.600 10.700L20.800 7.500" stroke="#fff" stroke-width="1.500" stroke-linecap="round"/><path d="M13 15l3-2.800" stroke="#fff" stroke-width=".8"/></svg></div>
<div class="tr" style="left:668.300px"><svg width="27.500" height="28" viewBox="0 0 27.500 28"><path d="M11.500 9l5 5-5 5" fill="none" stroke="#fff" stroke-width="1.500"/></svg></div>
<i class="sep" style="left:706px;width:1.700px"></i>
<div class="tr" style="left:718px"><svg width="27.500" height="28" viewBox="0 0 27.500 28"><circle cx="12" cy="12.300" r="6" fill="none" stroke="#fff" stroke-width="1.400"/><path d="M16.300 16.700l5.500 5" stroke="#fff" stroke-width="1.600" stroke-linecap="round"/></svg></div>
<svg class="ab" style="left:760px;top:15px" width="19" height="17" viewBox="0 0 19 17"><path d="M9.500 1.200L18 16H1z" fill="#f59a0c" stroke="#f59a0c" stroke-width="1.200" stroke-linejoin="round"/><path d="M9.500 6v5.500" stroke="#8a8478" stroke-width="1.500"/><circle cx="9.500" cy="13.600" r=".9" fill="#8a8478"/></svg>
<div class="tr" style="left:792.300px"><svg width="27.500" height="28" viewBox="0 0 27.500 28"><rect x="5.800" y="6.200" width="16.400" height="16" rx="3" fill="#fdfdfd"/><rect x="8.600" y="11.100" width="10.600" height="5.700" fill="#454545"/><path d="M9.800 11.800v4.300M11.300 11.800v4.300M12.800 11.800v4.300M14.300 11.800v4.300M15.800 11.800v4.300M17.300 11.800v4.300M18.500 11.800v4.300" stroke="#b8b8b8" stroke-width=".5"/><path d="M9 16.200h9.800" stroke="#999" stroke-width=".5"/><path d="M10 19h8" stroke="#ececec" stroke-width="1.200"/></svg></div>
<div class="tr" style="left:830.400px"><svg width="27.500" height="28" viewBox="0 0 27.500 28"><circle cx="13.800" cy="14" r="10" fill="#fff"/><path d="M10.600 9.700a5.800 5.800 0 1 0 6.400 0" fill="none" stroke="#444" stroke-width="1.200" stroke-linecap="round"/><path d="M13.800 7.400v6.200" stroke="#444" stroke-width="1.400" stroke-linecap="round"/></svg></div>
<!-- clock -->
<div class="ab" style="left:860.700px;top:10px;width:64px;text-align:center;font:17.300px/20px 'DejaVu Sans','Liberation Sans',sans-serif;color:#0c0c0c">6:06</div>
<div class="ab" style="left:861px;top:29.500px;width:64px;text-align:center;font:10.600px/12px 'Liberation Sans',sans-serif;color:#0c0c0c">2023/4/14</div>
<!-- trash -->
<svg class="ab" style="left:930px;top:12px" width="24" height="24" viewBox="0 0 24 24"><defs><linearGradient id="tg1" x1="0" y1="0" x2="0" y2="1"><stop offset="0" stop-color="#a2a9cb"/><stop offset=".72" stop-color="#b6bed6"/><stop offset=".8" stop-color="#e4e9ee"/><stop offset="1" stop-color="#f0f3f5"/></linearGradient></defs><path d="M1 1h22l-3 20q-.3 2-2.300 2H6.300q-2 0-2.300-2z" fill="url(#tg1)"/><path d="M1 1h22l-.3 2H1.300z" fill="#cfd9e2"/><path d="M1 1h22l-3 20q-.3 2-2.300 2H6.300q-2 0-2.300-2z" fill="none" stroke="#e6ebf0" stroke-width=".9"/><circle cx="12" cy="11.500" r="3.800" fill="none" stroke="#6f86c0" stroke-width="1.700" stroke-dasharray="5 3"/></svg>
<!-- bell -->
<div class="tr" style="left:966.200px"><svg width="27.500" height="28" viewBox="0 0 27.500 28"><path d="M13.800 5.500c-3.800 0-5.500 3-5.500 6.500 0 3.500-1 5-2.300 6.500h15.600c-1.300-1.500-2.300-3-2.300-6.500 0-3.500-1.700-6.500-5.500-6.500z" fill="#fff"/><path d="M11.300 20.300h5a2.500 2.500 0 0 1-5 0z" fill="#fff"/></svg></div>
</div>
</body>
</html>
